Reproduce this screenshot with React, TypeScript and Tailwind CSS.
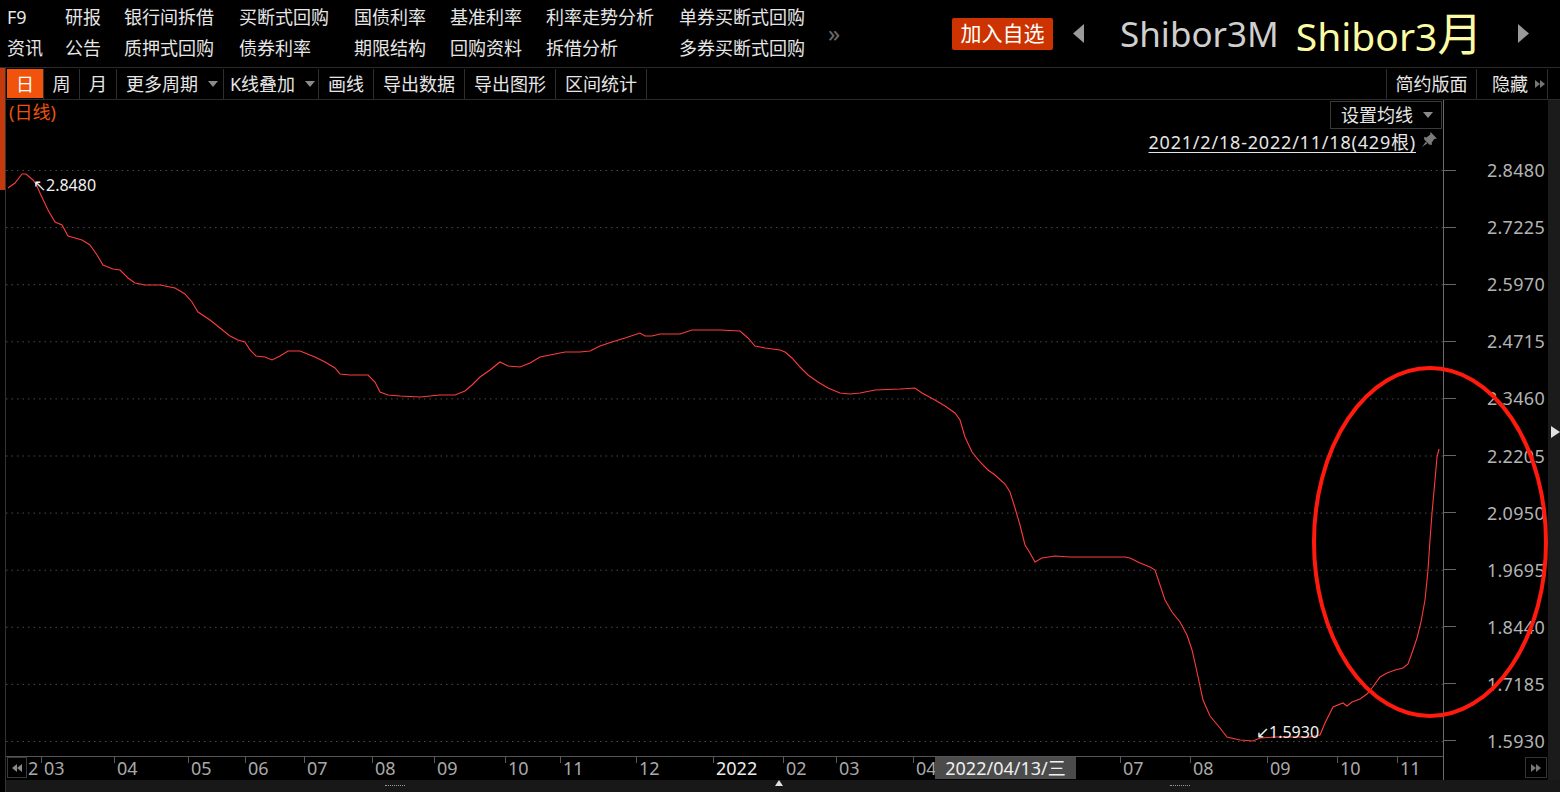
import React from "react";

const topRow = ["F9", "研报", "银行间拆借", "买断式回购", "国债利率", "基准利率", "利率走势分析", "单券买断式回购"];
const bottomRow = ["资讯", "公告", "质押式回购", "债券利率", "期限结构", "回购资料", "拆借分析", "多券买断式回购"];

const yLabels = ["2.8480", "2.7225", "2.5970", "2.4715", "2.3460", "2.2205", "2.0950", "1.9695", "1.8440", "1.7185", "1.5930"];

// x-axis segments: [label, width from this tick to the next]; empty labels sit under the date tooltip
const xSegments: [string, number][] = [
  ["03", 73],
  ["04", 74],
  ["05", 57],
  ["06", 59],
  ["07", 68],
  ["08", 62],
  ["09", 71],
  ["10", 55],
  ["11", 76],
  ["12", 77],
  ["2022", 70],
  ["02", 53],
  ["03", 77],
  ["04", 72],
  ["", 65],
  ["", 70],
  ["07", 70],
  ["08", 77],
  ["09", 70],
  ["10", 60],
  ["11", 46],
];

const line: [number, number][] = [
  [8, 188], [15, 183], [22, 174], [26, 174], [33, 180], [36, 184], [40, 193], [48, 210], [55, 222], [62, 225],
  [68, 236], [75, 238], [82, 240], [90, 245], [97, 255], [103, 265], [113, 269], [120, 270], [128, 278], [135, 283],
  [145, 285], [160, 285], [165, 286], [175, 288], [185, 294], [192, 302], [198, 312], [210, 320], [220, 328], [230, 336],
  [238, 340], [245, 342], [250, 350], [256, 356], [265, 357], [272, 360], [280, 356], [288, 351], [300, 351], [305, 353],
  [315, 357], [325, 362], [335, 368], [340, 374], [350, 375], [368, 375], [375, 382], [380, 392], [388, 395], [400, 396],
  [420, 397], [440, 395], [455, 395], [465, 391], [472, 385], [480, 377], [490, 370], [500, 362], [508, 366], [520, 367],
  [530, 363], [540, 357], [550, 355], [565, 352], [580, 352], [590, 351], [600, 346], [612, 342], [625, 338], [640, 333],
  [645, 336], [652, 336], [660, 334], [680, 334], [692, 330], [720, 330], [740, 331], [748, 338], [755, 346], [765, 348],
  [780, 350], [785, 352], [792, 358], [800, 367], [808, 375], [818, 382], [828, 388], [840, 393], [850, 394], [860, 393],
  [875, 390], [900, 389], [915, 388], [922, 393], [935, 400], [945, 406], [955, 413], [960, 420], [965, 437], [972, 452],
  [980, 462], [988, 470], [995, 475], [1005, 484], [1010, 492], [1015, 508], [1020, 525], [1025, 545], [1030, 553], [1035, 562],
  [1042, 558], [1055, 556], [1070, 557], [1100, 557], [1125, 557], [1130, 558], [1140, 563], [1150, 567], [1155, 570], [1160, 585],
  [1165, 600], [1172, 612], [1180, 622], [1187, 635], [1192, 650], [1197, 672], [1203, 700], [1210, 716], [1220, 728], [1227, 737],
  [1240, 740], [1253, 741], [1260, 738], [1275, 737], [1310, 737], [1320, 735], [1325, 723], [1333, 707], [1343, 703], [1347, 706],
  [1352, 702], [1360, 699], [1367, 694], [1372, 688], [1380, 677], [1387, 673], [1395, 670], [1403, 668], [1408, 664], [1413, 650],
  [1417, 638], [1421, 622], [1425, 600], [1428, 570], [1430, 540], [1432, 513], [1435, 480], [1437, 457], [1439, 449],
];

const Caret = () => (
  <svg width="10" height="7" viewBox="0 0 10 7" className="ml-[10px]">
    <polygon points="0,0 10,0 5,6" fill="#8a8a8a" />
  </svg>
);

const DoubleArrow = ({ left = false, color = "#777" }: { left?: boolean; color?: string }) => (
  <svg width="10" height="8" viewBox="0 0 10 8" className={left ? "rotate-180" : ""}>
    <polygon points="0,0 5,4 0,8" fill={color} />
    <polygon points="5,0 10,4 5,8" fill={color} />
  </svg>
);

const ToolCell = ({ children, className = "" }: { children: React.ReactNode; className?: string }) => (
  <div className={`flex items-center justify-center whitespace-nowrap border-r border-[#2f2f2f] ${className}`}>{children}</div>
);

const App = () => {
  return (
    <div className="relative w-[1560px] h-[792px] overflow-hidden bg-black text-[#e6e6e6] font-['Noto_Sans','Noto_Sans_CJK_SC',sans-serif]">
      {/* header */}
      <div className="flex h-[68px] items-center border-b border-[#2b2b2b]">
        <div className="grid grid-cols-[58px_59px_115px_115px_96px_96px_133px_149px] grid-rows-[31px_31px] self-start pt-[1px] pl-[7px] text-[18px] leading-none">
          {topRow.map((t) => (
            <div key={t} className="flex items-center whitespace-nowrap">{t}</div>
          ))}
          {bottomRow.map((t) => (
            <div key={t} className="flex items-center whitespace-nowrap">{t}</div>
          ))}
        </div>
        <div className="-mt-[2px] w-[16px] text-[24px] leading-none text-[#6a6a6a]">»</div>
        <div className="ml-[108px] flex h-[32px] w-[101px] items-center justify-center rounded-[2px] bg-[#cc3300] text-[21px] text-white">
          加入自选
        </div>
        <svg width="11" height="19" viewBox="0 0 11 19" className="ml-[20px]">
          <polygon points="11,0 11,19 0,9.5" fill="#9a9a9a" />
        </svg>
        <div className="ml-[36px] flex items-center gap-[17px] whitespace-nowrap leading-none">
          <span className="text-[35px] text-[#cfcfcf]">Shibor3M</span>
          <span className="text-[39px] text-[#fbfba4]">
            Shibor3<span className="text-[45px]">月</span>
          </span>
        </div>
        <svg width="11" height="19" viewBox="0 0 11 19" className="ml-[36px]">
          <polygon points="0,0 0,19 11,9.5" fill="#9a9a9a" />
        </svg>
      </div>

      {/* body */}
      <div className="flex h-[724px]">
        <div className="w-[6px] border-r border-[#333]">
          <div className="h-[122px] w-[5px] bg-[#c43a0c]" />
        </div>
        <div className="flex flex-1 flex-col">
          {/* toolbar */}
          <div className="flex h-[32px] border-b border-[#2b2b2b] pt-[1px] text-[18px] leading-none">
            <div className="ml-[1px] flex h-[29px] w-[36px] items-center justify-center bg-[#f1520c] text-white">日</div>
            <ToolCell className="w-[37px] border-l">周</ToolCell>
            <ToolCell className="w-[37px]">月</ToolCell>
            <ToolCell className="w-[107px] pl-[4px]">更多周期<Caret /></ToolCell>
            <ToolCell className="w-[95px] pl-[3px]">K线叠加<Caret /></ToolCell>
            <ToolCell className="w-[55px]">画线</ToolCell>
            <ToolCell className="w-[91px]">导出数据</ToolCell>
            <ToolCell className="w-[91px]">导出图形</ToolCell>
            <ToolCell className="w-[91px]">区间统计</ToolCell>
            <div className="flex-1" />
            <ToolCell className="w-[91px] border-l">简约版面</ToolCell>
            <div className="flex w-[71px] items-center gap-[7px] whitespace-nowrap border-r border-[#2f2f2f] pl-[15px]">
              隐藏
              <DoubleArrow />
            </div>
            <div className="w-[12px]" />
          </div>

          {/* main */}
          <div className="flex h-[680px]">
            <div className="flex flex-1 flex-col border-r border-[#6a6a6a]">
              <div className="relative h-[657px] border-b border-[#555]">
                <svg width="1437" height="656" viewBox="6 100 1437 656" className="absolute inset-0">
                  {yLabels.map((l, i) => (
                    <line
                      key={l}
                      x1={6}
                      x2={1443}
                      y1={170.5 + i * 57.1}
                      y2={170.5 + i * 57.1}
                      stroke="#4a4a4a"
                      strokeWidth="1"
                      strokeDasharray="1.5 4"
                    />
                  ))}
                  <polyline
                    points={line.map(([x, y]) => `${x},${y}`).join(" ")}
                    fill="none"
                    stroke="#ff3b3b"
                    strokeWidth="1.1"
                  />
                  <text x={33} y={191} fill="#f0f0f0" fontSize="16" fontFamily="Noto Sans, sans-serif">↖2.8480</text>
                  <text x={1256} y={738} fill="#f0f0f0" fontSize="16" fontFamily="Noto Sans, sans-serif">↙1.5930</text>
                </svg>
                <div className="absolute left-[3px] top-[3px] text-[18px] leading-none text-[#e8540e]">(日线)</div>
                <div className="absolute right-[1px] top-[1px] flex flex-col items-end gap-[4px]">
                  <div className="flex h-[28px] w-[112px] items-center border border-[#3a3a3a] bg-black pl-[10px] text-[18px] leading-none">
                    设置均线
                    <Caret />
                  </div>
                  <div className="mr-[4px] flex items-center gap-[5px]">
                    <span className="text-[18px] leading-none tracking-[0.8px] underline underline-offset-[3px]">2021/2/18-2022/11/18(429根)</span>
                    <svg width="17" height="17" viewBox="0 0 16 16" className="-mt-[6px]">
                      <path d="M9 1 L15 7 L12.5 7.5 L10 11 L10.5 13 L8 13 L3 8 L3 5.5 L5 6 L8.5 3.5 Z M4.5 10 L1 15 L6 11.5 Z" fill="#7a7a7a" />
                    </svg>
                  </div>
                </div>
              </div>
              {/* x axis */}
              <div className="relative flex h-[23px] text-[18px] leading-none text-[#a9a9a9]">
                <div className="ml-[1px] flex h-[21px] w-[20px] shrink-0 items-center justify-center border border-[#3a3a3a] bg-black">
                  <DoubleArrow left color="#8a8a8a" />
                </div>
                <div className="w-[14px] shrink-0 pt-[2px] pl-[1px]">2</div>
                {xSegments.map(([l, w], i) => (
                  <div key={i} style={{ width: w }} className="flex shrink-0 items-start">
                    <div className="h-[6px] w-px bg-[#5a5a5a]" />
                    {l && <span className={`ml-[2px] mt-[2px] ${l === "2022" ? "text-[#ececec]" : ""}`}>{l}</span>}
                  </div>
                ))}
                <div className="absolute left-[929px] top-0 flex h-[22px] w-[141px] items-center justify-center bg-[#4b4b4b] text-[#f0f0f0]">
                  2022/04/13/三
                </div>
              </div>
            </div>

            {/* y axis */}
            <div className="flex w-[104px] flex-col">
              <div className="h-[657px] pt-[41.5px] text-[18px] leading-none text-[#b3b3b3]">
                {yLabels.map((l) => (
                  <div key={l} className="flex h-[57.1px] items-center">
                    <div className="h-px w-[12px] bg-[#666]" />
                    <span className="flex-1 pr-[3px] text-right tracking-[0.3px]">{l}</span>
                  </div>
                ))}
              </div>
              <div className="flex h-[23px] items-start justify-end pr-[1px]">
                <div className="flex h-[21px] w-[22px] items-center justify-center border border-[#333]">
                  <DoubleArrow />
                </div>
              </div>
            </div>

            {/* right strip */}
            <div className="w-[12px] bg-[#1b1b1b]">
              <svg width="9" height="12" viewBox="0 0 9 12" className="ml-[3px] mt-[326px]">
                <polygon points="0,0 0,12 9,6" fill="#e0e0e0" />
              </svg>
            </div>
          </div>

          {/* scroll bar */}
          <div className="flex h-[12px] items-center bg-[#181818]">
            <div className="ml-[379px] h-[2px] w-[20px] border-t border-dotted border-[#999]" />
            <svg width="8" height="6" viewBox="0 0 8 6" className="ml-[370px] self-start">
              <polygon points="4,0 8,6 0,6" fill="#e0e0e0" />
            </svg>
            <div className="ml-[387px] h-[2px] w-[20px] border-t border-dotted border-[#999]" />
          </div>
        </div>
      </div>

      {/* red annotation ellipse */}
      <svg width="1560" height="792" className="pointer-events-none absolute inset-0">
        <ellipse cx="1430" cy="542" rx="116" ry="174" fill="none" stroke="#ff1a0d" strokeWidth="4" />
      </svg>
    </div>
  );
};

export default App;
